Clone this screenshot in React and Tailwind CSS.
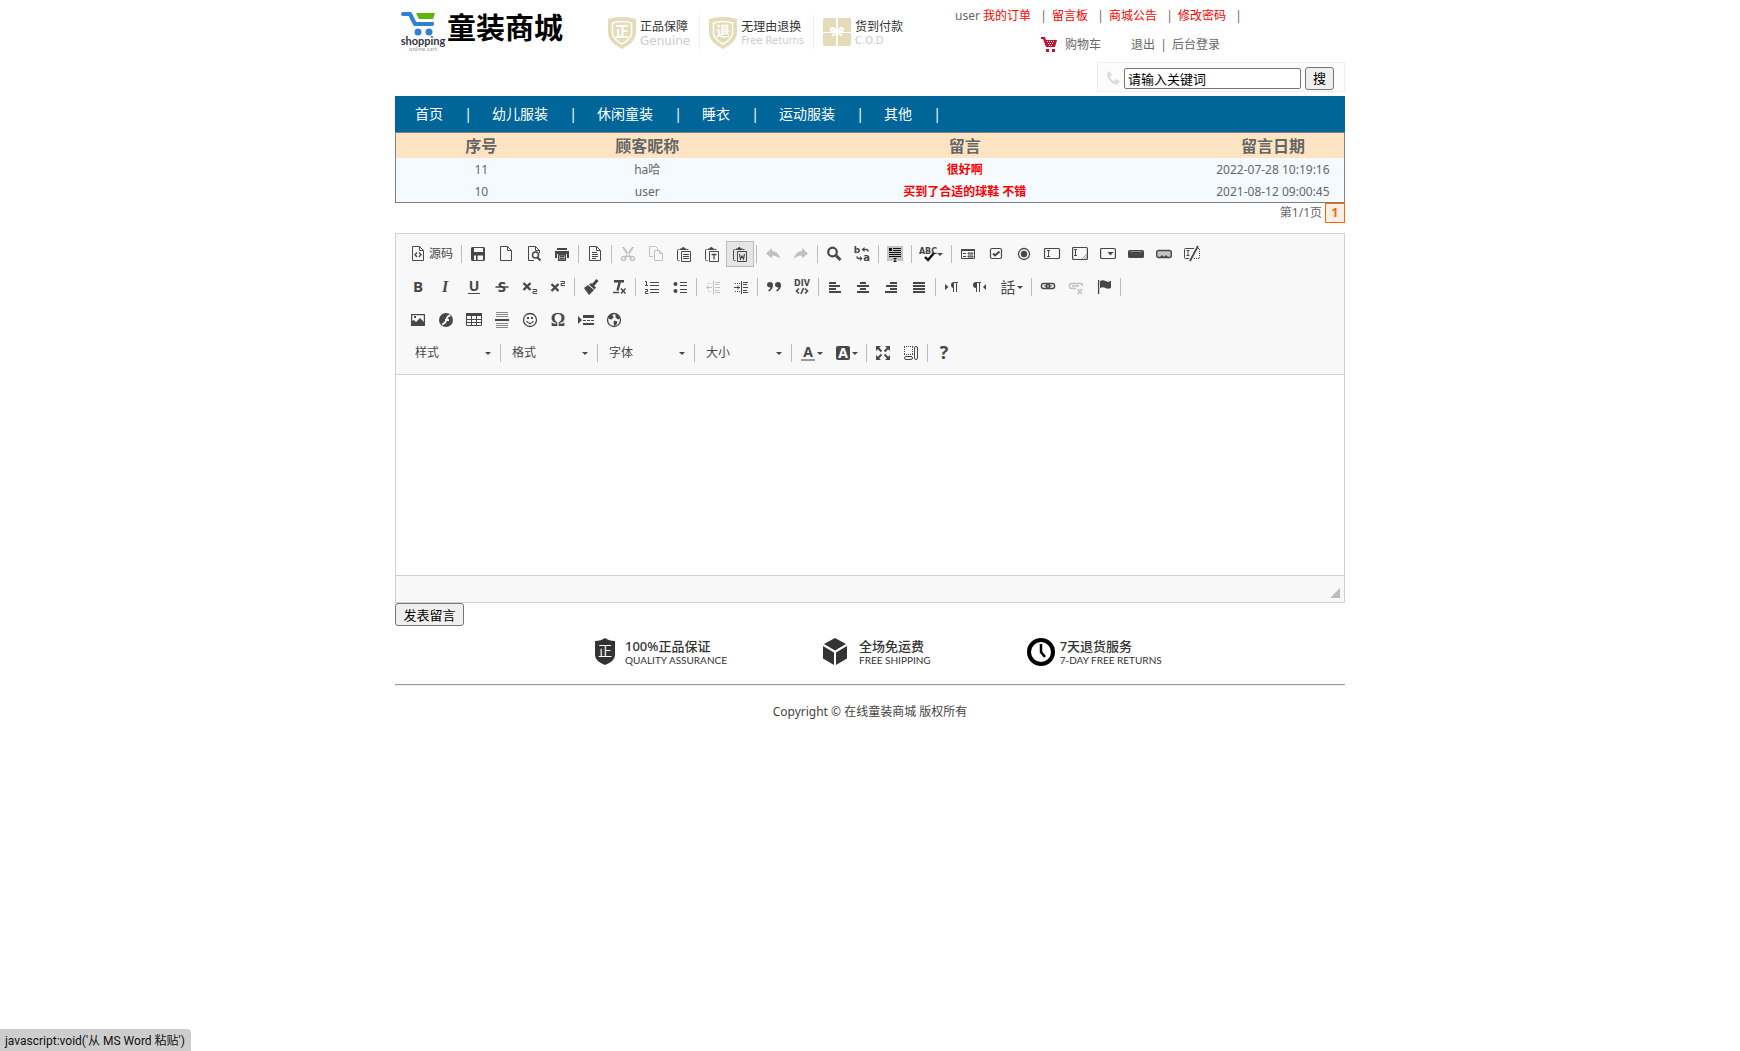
import { Fragment } from 'react';

const topLinks = ['我的订单', '留言板', '商城公告', '修改密码'];
const navLinks = ['首页', '幼儿服装', '休闲童装', '睡衣', '运动服装', '其他'];

const messages = [
  { id: 11, name: 'ha哈', content: '很好啊', date: '2022-07-28 10:19:16' },
  { id: 10, name: 'user', content: '买到了合适的球鞋 不错', date: '2021-08-12 09:00:45' }
];

const line = { fill: 'none', stroke: 'currentColor' };
const glyph = { fontFamily: 'DejaVu Sans', textAnchor: 'middle' };

const Page = () => <path {...line} d="M2.5 .5h7l4 4v10h-11zM9.5 .5v4h4" />;

const Clipboard = () => (
  <>
    <path {...line} d="M3.5 14.5H2.500q-1 0-1-1V4.500q0-1 1-1h1M11 3.500h1.500" />
    <path fill="currentColor" d="M4 4V2.500h1.500Q6 1 7.300 1t1.800 1.500h1.500V4z" />
    <path {...line} d="M5.500 5.500h9v10h-9z" />
  </>
);

const icons = {
  source: (
    <>
      <Page />
      <path {...line} strokeWidth="1.400" d="M7 6.500L5 8.800 7 11M9 6.500l2 2.300L9 11" />
    </>
  ),
  save: (
    <path fill="currentColor" fillRule="evenodd" d="M2 1h12l1 1v12l-1 1H2l-1-1V2zM4 2v4h9V2zM4 9.500V14h2V9.500zM7.500 9.500V14H13V9.500z" />
  ),
  newpage: <Page />,
  preview: (
    <>
      <path {...line} d="M8 14.500H2.500V.5h7l4 4V7M9.500 .5v4h4" />
      <circle {...line} strokeWidth="1.500" cx="9.500" cy="9" r="3" />
      <path {...line} strokeWidth="2" d="M11.500 11.500l3 3" />
    </>
  ),
  print: (
    <>
      <path fill="currentColor" d="M3 2h10v2H3zM1 5h14v7h-2V8H3v4H1z" />
      <path {...line} strokeWidth="1.500" d="M4.700 8.700h6.600v5.600H4.700zM6 10.500h4M6 12.500h4" />
    </>
  ),
  templates: (
    <>
      <Page />
      <path {...line} d="M5 6.500h5M5 8.500h6M5 10.500h6M5 12.500h4" />
    </>
  ),
  cut: (
    <>
      <path fill="currentColor" d="M2 1l2 0 5 7 3 3-2 1-3-3zM14 1l-2 0-5 7-3 3 2 1 3-3z" />
      <circle {...line} strokeWidth="1.500" cx="3.500" cy="12.500" r="2" />
      <circle {...line} strokeWidth="1.500" cx="12.500" cy="12.500" r="2" />
    </>
  ),
  copy: <path {...line} d="M5 10.500H1.500v-10h6l2 2V4M6.500 4.500h5l3 3v7h-8zM11.500 4.500v3h3" />,
  paste: (
    <>
      <Clipboard />
      <path {...line} d="M7 8.500h6M7 10.500h6M7 12.500h6" />
    </>
  ),
  pastetext: (
    <>
      <Clipboard />
      <path {...line} strokeWidth="1.300" d="M7.500 8.500h5M10 8.500v5" />
    </>
  ),
  pasteword: (
    <>
      <Clipboard />
      <path {...line} strokeWidth="1.200" d="M7.500 8l1 5 1.500-3 1.500 3 1-5" />
    </>
  ),
  undo: <path fill="currentColor" d="M1 7.500L7 2v3q7 .5 8 8-3-3.500-8-3.500v3z" />,
  redo: <path fill="currentColor" d="M15 7.500L9 2v3q-7 .5-8 8 3-3.500 8-3.500v3z" />,
  find: (
    <>
      <circle {...line} strokeWidth="2.200" cx="6.500" cy="6" r="4.300" />
      <path {...line} strokeWidth="3" d="M10 9.500l4.500 4.500" />
    </>
  ),
  replace: (
    <>
      <text {...glyph} x="3" y="7" fontSize="9" fontWeight="bold" fill="currentColor">b</text>
      <text {...glyph} x="12.500" y="15" fontSize="10" fontWeight="bold" fill="currentColor">a</text>
      <path {...line} strokeWidth="1.500" d="M9 3.500h3q2 0 2 2M3 10.500q0 2 2 2h2" />
      <path fill="currentColor" d="M7.500 3.500L10.500 1v5zM8.500 12.500L6 10v5z" />
    </>
  ),
  selectall: (
    <>
      <path fill="#c4c4c4" d="M0 0h16v15H0z" />
      <path stroke="#111" fill="none" d="M6 2.500h8M6 4.500h8M2 6.500h12M2 8.500h12M2 10.500h12M6.500 12.500h3M8 12v4M6.500 15.500h3" />
      <path fill="#111" d="M2 2h3v3H2z" />
    </>
  ),
  spell: (
    <>
      <text {...glyph} x="8" y="8" fontSize="8" fontWeight="bold" fill="currentColor">ABC</text>
      <path stroke="#111" fill="none" strokeWidth="2.400" d="M5 11l3 3 6-7" />
    </>
  ),
  form: (
    <>
      <path {...line} d="M1.500 3.500h13v9h-13z" />
      <path fill="currentColor" d="M1 3h14v2H1z" />
      <path {...line} d="M3 7.500h3M3 10.500h3M8 7h5v1H8zM8 10h5v1H8z" />
    </>
  ),
  checkbox: (
    <>
      <rect {...line} x="2.500" y="2.500" width="11" height="10" rx="1.500" strokeWidth="1.200" />
      <path {...line} strokeWidth="2" d="M5 7.500l2 2 4.500-4" />
    </>
  ),
  radio: (
    <>
      <circle {...line} strokeWidth="1.300" cx="8" cy="8" r="5.500" />
      <circle fill="currentColor" cx="8" cy="8" r="3.200" />
    </>
  ),
  textfield: (
    <>
      <rect {...line} x=".5" y="2.500" width="15" height="10" rx="1" strokeWidth="1.200" />
      <path {...line} d="M3 4.500h3M4.500 4.500v6M3 10.500h3" />
    </>
  ),
  textarea: (
    <>
      <rect {...line} x=".6" y="1.500" width="14.800" height="12" rx="1" strokeWidth="1.200" />
      <path {...line} d="M2 3.500h3M3.500 3.500v6M2 9.500h3" />
      <path {...line} strokeDasharray="1 .6" d="M9.500 13.500l5-5M12 13.500l3-3" />
    </>
  ),
  select: (
    <>
      <rect {...line} x=".6" y="2.500" width="14.800" height="10" rx="1" strokeWidth="1.200" />
      <path fill="currentColor" d="M7.500 6h6l-3 3.500z" />
    </>
  ),
  button: (
    <>
      <rect fill="currentColor" x="0" y="4" width="16" height="8" rx="1.500" />
      <path stroke="#888" fill="none" d="M2 5.500h12" />
    </>
  ),
  imagebutton: (
    <>
      <rect fill="#c4c4c4" stroke="currentColor" x=".7" y="4.500" width="14.600" height="7" rx="2" strokeWidth="1.400" />
      <path fill="currentColor" d="M3 12l3-3 2 2 2-2 3 3z" />
    </>
  ),
  hidden: (
    <>
      <path {...line} d="M10 2.500H1.500q-1 0-1 1v8q0 1 1 1H5M2.500 4.500h3M4 4.500v5M2.500 9.500h3" />
      <path {...line} strokeDasharray="1 1" d="M12 2.500h3.500v10H9" />
      <path {...line} strokeWidth="1.800" d="M6 15L14 0" />
    </>
  ),
  bold: <text {...glyph} x="8" y="13" fontSize="15" fontWeight="bold" style={{ fontFamily: 'Open Sans' }} fill="currentColor">B</text>,
  italic: <text {...glyph} x="7" y="13" fontSize="16" fontWeight="bold" fontStyle="italic" style={{ fontFamily: 'Liberation Serif' }} fill="currentColor">I</text>,
  underline: (
    <>
      <text {...glyph} x="8" y="12" fontSize="14" fontWeight="bold" style={{ fontFamily: 'Open Sans' }} fill="currentColor">U</text>
      <path {...line} d="M2 14.500h12" />
    </>
  ),
  strike: (
    <>
      <text {...glyph} x="8" y="13" fontSize="15" fontWeight="bold" style={{ fontFamily: 'Open Sans' }} fill="currentColor">S</text>
      <path {...line} strokeWidth="1.500" d="M1.500 8h13" />
    </>
  ),
  sub: (
    <>
      <path {...line} strokeWidth="2.400" d="M1.500 4l7 7M8.500 4l-7 7" />
      <path {...line} d="M10.500 10.500h4v2h-3.500v2h4" />
    </>
  ),
  sup: (
    <>
      <path {...line} strokeWidth="2.400" d="M1.500 5l7 7M8.500 5l-7 7" />
      <path {...line} d="M10.500 2.500h4v2h-3.500v2h4" />
    </>
  ),
  brush: (
    <>
      <path fill="currentColor" d="M1 9l4-3 6 5-5 5zM6 5.500l2-1.500 5 4.500-1.500 2z" />
      <path {...line} strokeWidth="3" d="M9.500 6.500L14.500 1" />
    </>
  ),
  removeformat: (
    <>
      <path {...line} strokeWidth="2.400" d="M3 2.200h10M9 2L6.500 11.500" />
      <path {...line} strokeWidth="1.500" d="M2 13.500h6M10 9.500l4.500 5M14.500 9.500l-4.500 5" />
    </>
  ),
  ol: <path {...line} d="M6 3.500h9M6 6.500h9M6 10.500h9M6 13.500h9M1 2.500h1.500v4M1 6.500h3M1 10.500h2.500v2H1.500v2h3" />,
  ul: (
    <>
      <path {...line} d="M8 3.500h7M8 6.500h7M8 10.500h7M8 13.500h7" />
      <circle fill="currentColor" cx="3.500" cy="5" r="2" />
      <circle fill="currentColor" cx="3.500" cy="12" r="2" />
    </>
  ),
  outdent: (
    <>
      <path {...line} d="M8.500 2v13M10 3.500h5M10 5.500h4M10 8.500h5M10 11.500h4M10 13.500h5M1 8.500h6M3 6.500v4" />
      <path {...line} strokeDasharray="1 1" d="M3 4.500h4M3 12.500h4" />
    </>
  ),
  indent: (
    <>
      <path {...line} d="M8.500 2v13M10 3.500h5M10 5.500h4M10 8.500h5M10 11.500h4M10 13.500h5M1 8.500h6M5 6.500v4" />
      <path {...line} strokeDasharray="1 1" d="M2 4.500h5M2 12.500h5" />
    </>
  ),
  quote: (
    <>
      <path fill="currentColor" d="M4 3a2.800 2.800 0 0 1 3 3q0 4-4 6.500l-1-1Q4.500 10 4.500 8.500 1 8.500 1 5.800 1.200 3 4 3z" />
      <path fill="currentColor" d="M12 3a2.800 2.800 0 0 1 3 3q0 4-4 6.500l-1-1q2.500-1.500 2.500-3Q9 8.500 9 5.800 9.200 3 12 3z" />
    </>
  ),
  div: (
    <>
      <text {...glyph} x="8" y="7" fontSize="8" fontWeight="bold" fill="currentColor">DIV</text>
      <path {...line} strokeWidth="1.600" d="M5 9.500l-2.500 2.500L5 14.500M11 9.500l2.500 2.500-2.500 2.500M9.500 9l-2.500 6" />
    </>
  ),
  alignleft: <path fill="currentColor" d="M2 3h7v2H2zM2 6h11v2H2zM2 9h7v2H2zM2 12h12v2H2z" />,
  aligncenter: <path fill="currentColor" d="M5 3h6v2H5zM2 6h12v2H2zM5 9h6v2H5zM2 12h12v2H2z" />,
  alignright: <path fill="currentColor" d="M7 3h7v2H7zM3 6h11v2H3zM7 9h7v2H7zM2 12h12v2H2z" />,
  justify: <path fill="currentColor" d="M2 3h12v2H2zM2 6h12v2H2zM2 9h12v2H2zM2 12h12v2H2z" />,
  ltr: (
    <>
      <path fill="currentColor" d="M1 5l3.500 3L1 11zM10 3v6q-3-.2-3-3t3-3z" />
      <path {...line} d="M9.500 3v10M12.500 3v10M9 3.500h5" />
    </>
  ),
  rtl: (
    <>
      <path fill="currentColor" d="M14 5l-3 3 3 3zM4 3v6q-3-.2-3-3t3-3z" />
      <path {...line} d="M4.500 3v10M7.500 3v10M4 3.500h5" />
    </>
  ),
  language: (
    <text x="8" y="14" fontSize="15" textAnchor="middle" fontFamily="Noto Sans CJK TC" fill="currentColor">話</text>
  ),
  link: (
    <>
      <rect {...line} x="1.500" y="4.500" width="8" height="5" rx="2" strokeWidth="1.500" />
      <rect {...line} x="6.500" y="4.500" width="8" height="5" rx="2" strokeWidth="1.500" />
      <path {...line} d="M4 7h8" />
    </>
  ),
  unlink: (
    <path {...line} strokeWidth="1.400" d="M8 9.500H3.500q-2 0-2-2.500t2-2.500h9q2 0 2 2.500M4 7h7M9.500 10l4.500 5M14 10l-4.500 5" />
  ),
  anchor: (
    <>
      <path {...line} strokeWidth="1.300" d="M2.600 1v14" />
      <path fill="currentColor" d="M4 2q3-1.500 5.500 0t5.500 0v7q-3 1.500-5.500 0T4 9z" />
    </>
  ),
  image: (
    <>
      <path {...line} strokeWidth="1.200" d="M1.600 2.600h12.800v10.800H1.600z" />
      <path fill="currentColor" d="M2 13v-4l2-1 2 2 4-4 4 4v3zM4 4h2v2H4z" />
    </>
  ),
  flash: (
    <>
      <circle fill="currentColor" cx="8" cy="8" r="7" />
      <path stroke="#f8f8f8" fill="none" strokeWidth="1.800" d="M12.500 3.500Q9.500 3.500 8.500 7.500T4 12.500M7 8h4" />
    </>
  ),
  table: (
    <>
      <path {...line} d="M.5 2.500h15v11H.5zM5.500 4v9M10.500 4v9M1 7.500h14M1 10.500h14" />
      <path fill="currentColor" d="M0 1h16v3H0z" />
    </>
  ),
  hr: (
    <>
      <path stroke="#888" fill="none" d="M2 .5h12M2 2.500h12M2 4.500h12M2 11.500h12M2 13.500h12M2 15.500h12" />
      <path fill="currentColor" d="M1 7h14v2H1z" />
    </>
  ),
  smiley: (
    <>
      <circle {...line} strokeWidth="1.300" cx="8" cy="8" r="6.500" />
      <path fill="currentColor" d="M5 5h2v2H5zM9 5h2v2H9z" />
      <path {...line} strokeWidth="1.300" d="M4.500 9q3.500 5 7 0" />
    </>
  ),
  omega: <text {...glyph} x="8" y="14" fontSize="18" fontWeight="bold" style={{ fontFamily: 'Liberation Serif' }} fill="currentColor">Ω</text>,
  pagebreak: (
    <>
      <path fill="currentColor" d="M0 4l4 4-4 4zM5 3h11v3H5zM5 11h11v2H5z" />
      <path {...line} strokeDasharray="3 1" d="M5 8.500h11" />
    </>
  ),
  iframe: (
    <>
      <circle {...line} strokeWidth="1.300" cx="8" cy="8" r="6.500" />
      <path fill="currentColor" d="M2 5q2-3 5-3L6.500 4 8 5 5.500 7.500 3 7zM9.500 2.500q3 0 4.500 4l-2 1-2.500-2zM8 8.500l3.500 1-1 3-2 1.500-1-3z" />
    </>
  ),
  textcolor: (
    <>
      <path stroke="#999" strokeWidth="2" d="M1 15h14" />
      <text {...glyph} x="8" y="12" fontSize="14" fontWeight="bold" style={{ fontFamily: 'Open Sans' }} fill="currentColor">A</text>
    </>
  ),
  bgcolor: (
    <>
      <rect fill="currentColor" x="1" y="1" width="14" height="14" rx="2" />
      <text {...glyph} x="8" y="13" fontSize="14" fontWeight="bold" style={{ fontFamily: 'Open Sans' }} fill="#fff">A</text>
    </>
  ),
  maximize: (
    <>
      <path fill="currentColor" d="M1 1h5L1 6zM15 1v5l-5-5zM1 15v-5l5 5zM15 15h-5l5-5z" />
      <path {...line} strokeWidth="2" d="M2.500 2.500L6.500 6.500M13.500 2.500L9.500 6.500M2.500 13.500L6.500 9.500M13.500 13.500L9.500 9.500" />
    </>
  ),
  blocks: (
    <>
      <path {...line} strokeDasharray="1 1" d="M1 1.500h9M1.500 2v8M9.500 2v8M1 9.500h9" />
      <rect {...line} x="11.500" y="1.500" width="3" height="13" rx="1.500" />
      <rect {...line} x="1.500" y="11.500" width="8" height="3" rx="1.500" />
    </>
  ),
  about: <text {...glyph} x="8" y="14" fontSize="18" fontWeight="bold" style={{ fontFamily: 'Open Sans' }} fill="currentColor">?</text>
};

// '|' draws a separator, '!' marks a disabled button, '>' adds a menu arrow, '#' is a combo
const rows = [
  ['source', '|', 'save', 'newpage', 'preview', 'print', '|', 'templates', '|', '!cut', '!copy', 'paste', 'pastetext', 'pasteword', '|', '!undo', '!redo', '|', 'find', 'replace', '|', 'selectall', '|', '>spell', '|', 'form', 'checkbox', 'radio', 'textfield', 'textarea', 'select', 'button', 'imagebutton', 'hidden'],
  ['bold', 'italic', 'underline', 'strike', 'sub', 'sup', '|', 'brush', 'removeformat', '|', 'ol', 'ul', '|', '!outdent', 'indent', '|', 'quote', 'div', '|', 'alignleft', 'aligncenter', 'alignright', 'justify', '|', 'ltr', 'rtl', '>language', '|', 'link', '!unlink', 'anchor', '|'],
  ['image', 'flash', 'table', 'hr', 'smiley', 'omega', 'pagebreak', 'iframe'],
  ['#样式', '|', '#格式', '|', '#字体', '|', '#大小', '|', '>textcolor', '>bgcolor', '|', 'maximize', 'blocks', '|', 'about']
];

const Arrow = ({ className }) => (
  <svg viewBox="0 0 6 3" className={`w-1.5 h-[3px] ${className}`}>
    <path d="M0 0h6L3 3z" fill="#474747" />
  </svg>
);

const ToolItem = ({ item }) => {
  if (item === '|') return <span className="w-px h-[18px] mx-[2px] bg-[#bcbcbc]" />;

  if (item[0] === '#') {
    const label = item.slice(1);
    return (
      <span className="relative flex items-center first:ml-0.5">
        <select aria-label={label} className="appearance-none w-[92px] h-[26px] pl-[9px] bg-transparent text-xs text-[#474747]">
          <option>{label}</option>
        </select>
        <Arrow className="absolute right-[7px] pointer-events-none" />
      </span>
    );
  }

  const name = item.replace(/^[!>]/, '');
  const disabled = item[0] === '!';
  const active = name === 'pasteword';

  return (
    <button
      type="button"
      title={name}
      disabled={disabled}
      className={`flex items-center h-[26px] ${active ? 'px-[5px] border border-[#bcbcbc] bg-[#e5e5e5]' : 'px-1.5'}`}
    >
      <svg viewBox="0 0 16 16" className={`size-4 shrink-0 overflow-visible ${disabled ? 'text-[#c0c0c0]' : 'text-[#474747]'}`}>
        {icons[name]}
      </svg>
      {name === 'source' && <span className="ml-[3px] text-xs">源码</span>}
      {item[0] === '>' && <Arrow className="ml-px" />}
    </button>
  );
};

const Shield = ({ char }) => (
  <svg viewBox="0 0 28 32" className="w-7 h-8">
    <path fill="#e4dbb8" d="M14 0q7 0 14 2v14q0 9-14 16Q0 25 0 16V2Q7 0 14 0z" />
    <path fill="none" stroke="#fff" strokeWidth="1.500" d="M14 4.500q5 0 9.500 1.500v10q0 6-9.500 11-9.500-5-9.500-11V6Q9 4.500 14 4.500z" />
    <text x="14" y="19" fontSize="14" textAnchor="middle" fill="#fff" fontWeight="bold" fontFamily="Noto Sans CJK SC">{char}</text>
  </svg>
);

const Gift = () => (
  <svg viewBox="0 0 28 32" className="w-7 h-8">
    <path fill="#e4dbb8" d="M1 1h12v14H0V2zM15 1h12l1 1v13H15zM0 16h13v13H1l-1-1zM15 16h13v12l-1 1H15z" />
    <path fill="none" stroke="#fff" strokeWidth="2" d="M14 15q-5-6-6-3t6 3q5-6 6-3t-6 3l-5 4M14 15l5 4" />
  </svg>
);

const Badge = ({ icon, title, sub, subClass, last }) => (
  <div className={`flex gap-1 h-[34px] pt-0.5 ${last ? '' : 'pr-[9px] mr-[9px] border-r border-[#eee]'}`}>
    {icon}
    <div className="text-[#333] whitespace-nowrap">
      <div className="text-xs leading-[19px]">{title}</div>
      <div className={`leading-[10px] font-['DejaVu_Sans'] text-[#ccc] ${subClass}`}>{sub}</div>
    </div>
  </div>
);

const Header = () => (
  <header className="flex h-24">
    <div className="flex w-[213px] pl-[5px] pt-3 shrink-0">
      <svg viewBox="0 0 46 42" className="w-[46px] h-[42px] overflow-visible">
        <path fill="#5fb40b" d="M16 1h19l-2 6H19z" />
        <path fill="none" stroke="#2f7fd8" strokeWidth="4" strokeLinecap="round" strokeLinejoin="round" d="M3 2h7l5 10h17" />
        <path fill="#2f7fd8" d="M16 10h18l-2 4H17z" />
        <circle cx="18" cy="20" r="3.500" fill="#2f7fd8" />
        <circle cx="29" cy="20" r="3.500" fill="#2f7fd8" />
        <text x="23" y="33" fontSize="11" textAnchor="middle" fontFamily="Lato" fontWeight="bold" fill="#334">shopping</text>
        <text x="23" y="39" fontSize="6" textAnchor="middle" fontFamily="Lato" fill="#999">online cart</text>
      </svg>
      <h1 className="ml-[1px] text-[29px] leading-8 font-bold text-black whitespace-nowrap">童装商城</h1>
    </div>
    <div className="flex pt-[15px]">
      <Badge icon={<Shield char="正" />} title="正品保障" sub="Genuine" subClass="text-xs" />
      <Badge icon={<Shield char="退" />} title="无理由退换" sub="Free Returns" subClass="text-[10px]" />
      <Badge icon={<Gift />} title="货到付款" sub="C.O.D" subClass="text-[10px]" last />
    </div>
    <div className="ml-auto w-[390px] shrink-0 text-xs text-[#666]">
      <div className="flex h-8 items-center">
        <span className="w-7">user</span>
        {topLinks.map((link) => (
          <Fragment key={link}>
            <a href="#" className="text-[#f00]">{link}</a>
            <span className="w-[21px] pl-1 text-center">|</span>
          </Fragment>
        ))}
      </div>
      <div className="flex items-center h-[26px] pl-[86px]">
        <svg viewBox="0 0 16 16" className="w-4 h-4">
          <path fill="#c8102e" d="M0 0h4l1 3h11l-2 7H5L2 2H0zM5 12h3v3H5zM11 12h3v3h-3z" />
          <path stroke="#fff" fill="none" strokeDasharray="1 1" d="M6 4.500h8M7 6.500h6M8 8.500h4" />
        </svg>
        <a href="#" className="ml-2">购物车</a>
        <a href="#" className="ml-[30px]">退出</a>
        <span className="w-[17px] text-center">|</span>
        <a href="#">后台登录</a>
      </div>
      <form className="flex items-center ml-auto mt-1 w-[248px] h-[30px] pl-2 pt-0.5 border border-[#eee] bg-[#fcfcfc]">
        <svg viewBox="0 0 14 14" className="w-3.5 h-3.5">
          <path fill="#ddd" d="M1 2l3-2 2 4-2 2q1 3 4 4l2-2 4 2-2 3Q8 15 4 10T1 2z" />
        </svg>
        <input
          aria-label="关键词"
          defaultValue="请输入关键词"
          className="ml-1 w-[177px] h-[21px] px-[3px] border border-[#767676] rounded-[2px] bg-white text-[13px] text-black"
        />
        <button type="button" className="ml-1 w-[29px] h-[23px] border border-[#767676] rounded-[3px] bg-[#efefef] text-[13px] leading-5 text-black">搜</button>
      </form>
    </div>
  </header>
);

const MessageTable = () => (
  <table className="w-full table-fixed border border-[#808080] border-separate border-spacing-0 text-center text-xs leading-5 text-[#666]">
    <thead>
      <tr className="h-[25px] bg-[#ffe4c4] text-base leading-6">
        <th className="w-[18%]">序号</th>
        <th className="w-[17%]">顾客昵称</th>
        <th className="w-1/2">留言</th>
        <th className="w-[15%]">留言日期</th>
      </tr>
    </thead>
    <tbody>
      {messages.map((m) => (
        <tr key={m.id} className="h-[22px] bg-[#f5faff]">
          <td className="pt-0.5">{m.id}</td>
          <td className="pt-0.5">{m.name}</td>
          <td className="pt-0.5 font-bold text-[#f00]">{m.content}</td>
          <td className="pt-0.5 whitespace-nowrap">{m.date}</td>
        </tr>
      ))}
    </tbody>
  </table>
);

const Editor = () => (
  <div className="border border-[#d1d1d1]">
    <div className="flex flex-col gap-[7px] pt-[7px] pb-2 pl-2 bg-[#f8f8f8] border-b border-[#d1d1d1] text-[#474747]">
      {rows.map((row, i) => (
        <div key={i} className="flex items-center">
          {row.map((item, j) => (
            <ToolItem key={j} item={item} />
          ))}
        </div>
      ))}
    </div>
    <textarea aria-label="留言内容" className="block w-full h-[200px] p-5 resize-none bg-white outline-none" />
    <div className="flex items-end justify-end h-[27px] pb-1 pr-1 bg-[#f8f8f8] border-t border-[#d1d1d1]">
      <svg viewBox="0 0 10 10" className="size-2.5">
        <path fill="#bcbcbc" d="M10 0v10H0z" />
      </svg>
    </div>
  </div>
);

const Service = ({ icon, title, sub }) => (
  <div className="flex items-center text-[#333] whitespace-nowrap">
    {icon}
    <div>
      <div className="text-[13px] leading-4 font-medium">{title}</div>
      <div className="text-[10px] leading-3 font-['Lato']">{sub}</div>
    </div>
  </div>
);

const Footer = () => (
  <footer>
    <div className="flex gap-24 h-[58px] pb-[7px] pl-[200px]">
      <Service
        title="100%正品保证"
        sub="QUALITY ASSURANCE"
        icon={
          <svg viewBox="0 0 20 27" className="w-5 h-[27px] mr-2.5">
            <path fill="#333" d="M10 0q4 3 10 3v14q0 6-10 10Q0 23 0 17V3q6 0 10-3z" />
            <text x="10" y="18" fontSize="14" textAnchor="middle" fill="#fff" fontFamily="Noto Sans CJK SC">正</text>
          </svg>
        }
      />
      <Service
        title="全场免运费"
        sub="FREE SHIPPING"
        icon={
          <svg viewBox="0 0 24 27" className="w-6 h-[27px] mr-3">
            <path fill="#333" d="M12 0l11 6-11 6.500L1 6zM0 8l11 6.500V27L0 20.500zM24 8l-11 6.500V27l11-6.500z" />
          </svg>
        }
      />
      <Service
        title="7天退货服务"
        sub="7-DAY FREE RETURNS"
        icon={
          <svg viewBox="0 0 28 28" className="w-7 h-7 mr-[5px]">
            <circle cx="14" cy="14" r="12" fill="none" stroke="#000" strokeWidth="4" />
            <path fill="none" stroke="#000" strokeWidth="2.500" d="M14 6v8l4 5" />
          </svg>
        }
      />
    </div>
    <hr className="h-0.5 border-0 border-t border-[#999] bg-[#eee]" />
    <p className="mt-4 text-center text-xs leading-5 text-[#444]">Copyright © 在线童装商城 版权所有</p>
  </footer>
);

const App = () => {
  return (
    <div className="min-h-screen bg-white font-['Noto_Sans','Noto_Sans_CJK_SC',sans-serif]">
      <div className="w-full max-w-[950px] mx-auto">
        <Header />
        <nav className="flex items-center h-9 bg-[#006699] text-sm text-white">
          {navLinks.map((link) => (
            <Fragment key={link}>
              <a href="#" className="pl-5 pr-[21px]">{link}</a>
              <span className="w-2 text-center">|</span>
            </Fragment>
          ))}
        </nav>
        <MessageTable />
        <div className="flex justify-end gap-[3px] mb-2.5 text-xs leading-5 text-[#666]">
          <span>第1/1页</span>
          <span className="flex items-center justify-center w-5 h-5 border border-[#ff6600] bg-[#ffeee5] font-bold text-[#ff6600]">1</span>
        </div>
        <Editor />
        <button type="button" className="block w-[69px] h-[23px] border border-[#767676] rounded-[3px] bg-[#efefef] text-[13px] leading-5 text-black">发表留言</button>
        <Footer />
      </div>
      <div className="fixed bottom-0 left-0 h-[22px] pl-[5px] pr-1.5 bg-[#cdcdcd] rounded-tr font-['Roboto','Noto_Sans_CJK_SC',sans-serif] text-xs leading-6 text-[#111]">
        {"javascript:void('从 MS Word 粘贴')"}
      </div>
    </div>
  );
};

export default App;
